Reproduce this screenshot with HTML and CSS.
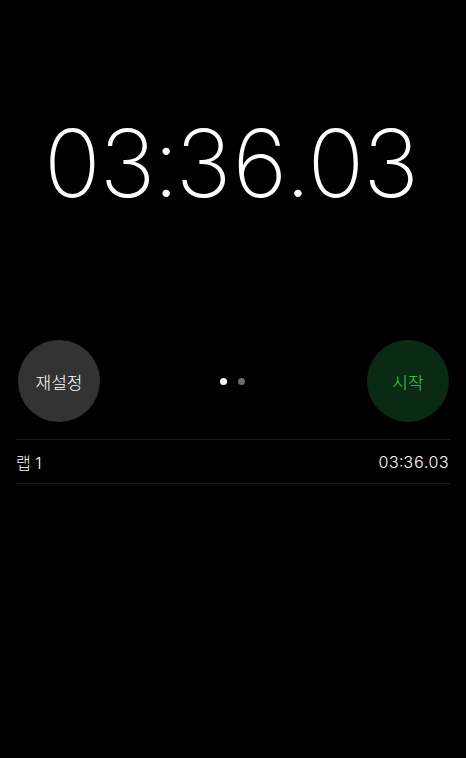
FILE: index.html
```html
<!DOCTYPE html>
<html lang="ko">
<head>
<meta charset="utf-8">
<link rel="stylesheet" href="styles.css">
</head>
<body>
<div class="app">
  <div class="timer">03:36.03</div>
  <div class="controls">
    <div class="btn btn-reset">재설정</div>
    <div class="dots">
      <span class="dot dot-on"></span>
      <span class="dot"></span>
    </div>
    <div class="btn btn-start">시작</div>
  </div>
  <div class="laps">
    <div class="lap">
      <span class="lap-name">랩 1</span>
      <span class="lap-time">03:36.03</span>
    </div>
  </div>
</div>
</body>
</html>
```
FILE: styles.css
```css
html, body {
  margin: 0;
  padding: 0;
  background: #000;
}
.app {
  width: 466px;
  height: 758px;
  background: #000;
  color: #fff;
  font-family: Inter, "Noto Sans CJK KR", sans-serif;
  box-sizing: border-box;
  padding: 0 16px;
}
.timer {
  padding-top: 108px;
  height: 232px;
  box-sizing: border-box;
  text-align: center;
  font-size: 94px;
  font-weight: 200;
  line-height: 110px;
  letter-spacing: -5px;
  padding-right: 7px;
  padding-left: 0;
  font-variant-numeric: tabular-nums;
}
.controls {
  display: flex;
  align-items: center;
  justify-content: space-between;
  height: 82px;
  margin-top: 108px;
  padding: 0 1px 0 2px;
}
.btn {
  width: 82px;
  height: 82px;
  border-radius: 50%;
  display: flex;
  align-items: center;
  justify-content: center;
  font-size: 17px;
  font-weight: 300;
}
.btn-reset {
  background: #333333;
  color: #fff;
}
.btn-start {
  background: #0b2a13;
  color: #32d74b;
}
.dots {
  display: flex;
  gap: 11px;
  padding-right: 2px;
}
.dot {
  width: 7px;
  height: 7px;
  border-radius: 50%;
  background: #6b6b6b;
}
.dot-on {
  background: #fff;
}
.laps {
  margin-top: 17px;
  border-top: 1px solid #1c1c1e;
}
.lap {
  display: flex;
  justify-content: space-between;
  align-items: center;
  height: 43px;
  border-bottom: 1px solid #1c1c1e;
  font-size: 16px;
  font-weight: 300;
  padding-right: 1px;
}
.lap-time {
  font-variant-numeric: tabular-nums;
}
```
